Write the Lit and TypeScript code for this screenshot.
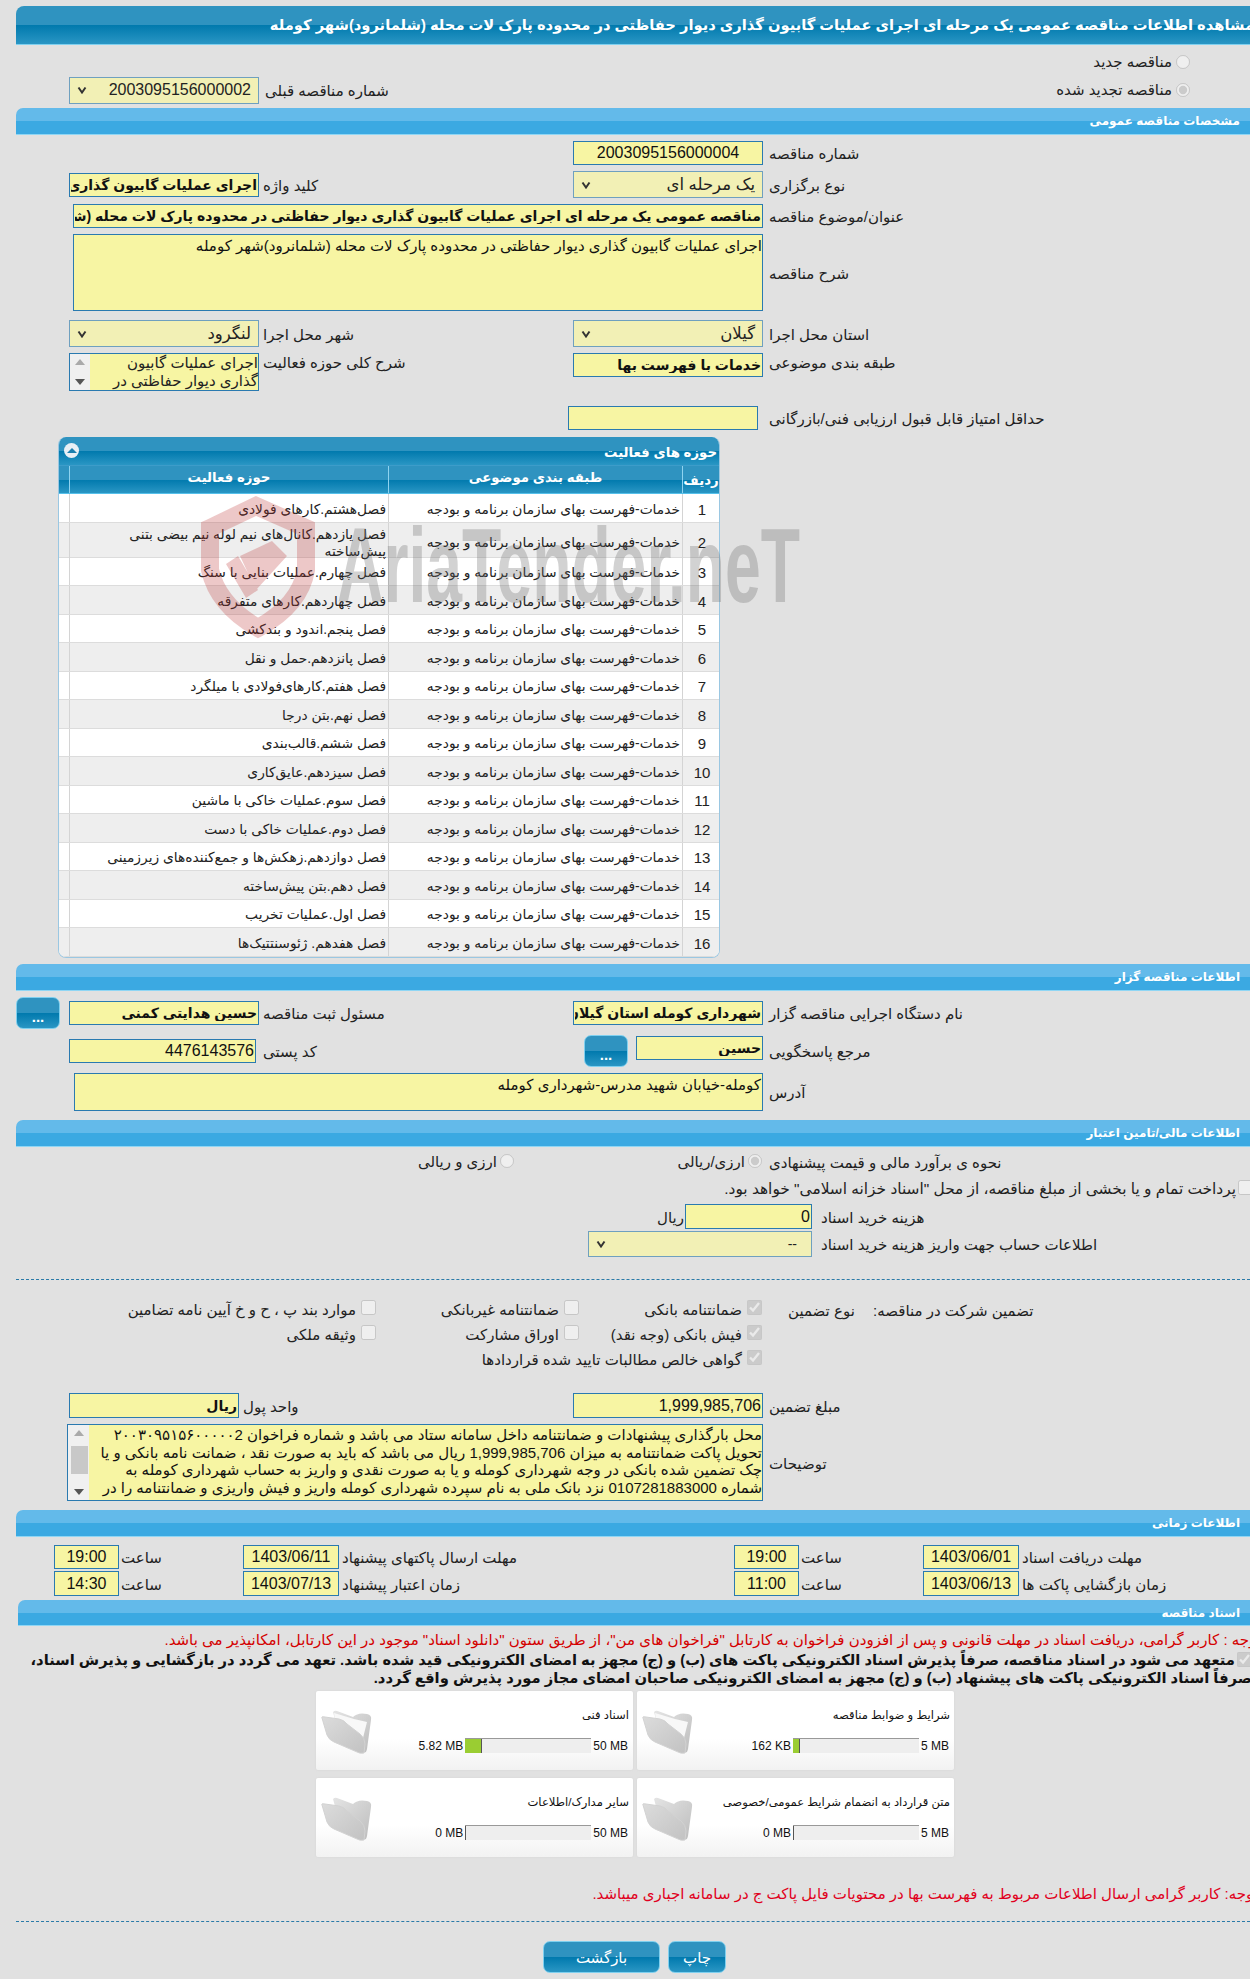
import { LitElement, html, css, svg } from "lit";
import { customElement } from "lit/decorators.js";

const ACTIVITIES = [
  "فصل‌هشتم.کارهای فولادی",
  "فصل یازدهم.کانال‌های نیم لوله نیم بیضی بتنی پیش‌ساخته",
  "فصل چهارم.عملیات بنایی با سنگ",
  "فصل چهاردهم.کارهای متفرقه",
  "فصل پنجم.اندود و بندکشی",
  "فصل پانزدهم.حمل و نقل",
  "فصل هفتم.کارهای‌فولادی با میلگرد",
  "فصل نهم.بتن درجا",
  "فصل ششم.قالب‌بندی",
  "فصل سیزدهم.عایق‌کاری",
  "فصل سوم.عملیات خاکی با ماشین",
  "فصل دوم.عملیات خاکی با دست",
  "فصل دوازدهم.زهکش‌ها و جمع‌کننده‌های زیرزمینی",
  "فصل دهم.بتن پیش‌ساخته",
  "فصل اول.عملیات تخریب",
  "فصل هفدهم. ژئوسنتتیک‌ها",
];

const CARDS = [
  { title: "شرایط و ضوابط مناقصه", max: "5 MB", used: "162 KB", fill: 7, paper: true },
  { title: "اسناد فنی", max: "50 MB", used: "5.82 MB", fill: 17, paper: true },
  { title: "متن قرارداد به انضمام شرایط عمومی/خصوصی", max: "5 MB", used: "0 MB", fill: 0, paper: false },
  { title: "سایر مدارک/اطلاعات", max: "50 MB", used: "0 MB", fill: 0, paper: false },
];

const chevron = html`<svg class="chev" viewBox="0 0 10 8"><path d="M1.5 1.5 5 6.5 8.5 1.5" fill="none" stroke="#333" stroke-width="2"/></svg>`;

const folder = (paper: boolean) => svg`
  <svg class="folder" viewBox="0 0 52 46">
    <defs>
      <linearGradient id="fb" x1="0" y1="0" x2="1" y2="1"><stop offset="0" stop-color="#e4e4e4"/><stop offset="1" stop-color="#bdbdbd"/></linearGradient>
      <linearGradient id="ff" x1="0" y1="0" x2="1" y2="1"><stop offset="0" stop-color="#dcdcdc"/><stop offset="1" stop-color="#c2c2c2"/></linearGradient>
    </defs>
    <path d="M13 4 Q15 2 17 3 L33 9 Q38 4 47 6 Q52 7 51 12 L47 41 Q46 46 43 44 L20 30 Z" fill="url(#fb)"/>
    ${paper ? svg`<path d="M14 5 L34 11 L47 14 L43 30 L16 18 Z" fill="#f8f8f8"/>` : ""}
    <path d="M2 10 Q1 8 5 9 L19 11 Q24 12 27 16 L40 26 Q45 30 45 36 L44 45 Q40 46 37 44 L14 34 Q9 32 7 27 Z" fill="url(#ff)" stroke="#d2d2d2" stroke-width="1"/>
  </svg>`;

@customElement("app-root")
export class AppRoot extends LitElement {
  static styles = css`
    :host {
      display: block;
      position: relative;
      width: 1250px;
      height: 1979px;
      overflow: hidden;
      background: #e1e1e1;
      direction: rtl;
      font-family: "Liberation Sans", "DejaVu Sans", sans-serif;
      font-size: 15px;
      color: #222;
    }
    * { box-sizing: border-box; }
    .page { padding-top: 6px; }

    .head {
      margin-left: 16px;
      height: 39px;
      border-radius: 8px 0 0 0;
      background: linear-gradient(#2f93c0 0 50%, #0079ad 50%, #2a96c4 100%);
      border-bottom: 1px solid #7fd0ef;
      color: #fff;
      font-weight: bold;
      font-size: 14.7px;
      line-height: 38px;
      white-space: nowrap;
    }
    .head span { display: inline-block; margin-right: -4px; }

    .bar {
      margin-left: 16px;
      height: 27px;
      border-radius: 7px 0 0 0;
      background: linear-gradient(#63baea 0 50%, #3ba9e2 50%, #3ba9e2 100%);
      border-bottom: 1px solid #8fd6f4;
      color: #fff;
      font-weight: bold;
      font-size: 12px;
      line-height: 27px;
      padding-right: 10px;
      white-space: nowrap;
    }
    .bar.docs { margin-left: 18px; height: 26px; }

    .grid {
      display: grid;
      grid-template-columns: 481px 196px 310px 194px 69px;
      align-items: center;
    }
    .lab {
      text-align: left;
      white-space: nowrap;
      padding-top: 2px;
    }
    .lab.l { padding-left: 2px; }
    .top { padding: 3px 0 4px; grid-template-rows: 28px 28px; }
    .radio-cell { padding-right: 60px; display: flex; align-items: center; gap: 4px; white-space: nowrap; }
    .radio-cell input { margin-top: -5px; }
    .main { padding-top: 3px; grid-template-rows: 30px 33px 30px 83px 39px 50px 30px; }
    .top-lab { align-self: start; padding-top: 1px; }

    .f {
      display: block;
      font-family: inherit;
      border: 1px solid #2a7ab0;
      background: #f7f5a3;
      color: #111;
      height: 24px;
      width: 190px;
      padding: 0 1px;
      font-size: 16px;
      direction: rtl;
      justify-self: end;
      outline: none;
      border-radius: 0;
      overflow: hidden;
      white-space: nowrap;
      line-height: 22px;
    }
    .center { text-align: center; }
    .bold { font-weight: bold; font-size: 14px; }
    .sel {
      display: flex;
      align-items: center;
      justify-content: space-between;
      justify-self: end;
      width: 190px;
      height: 27px;
      border: 1px solid #6fa0bf;
      background: #f2f0b5;
      padding: 0 7px;
      font-size: 16.5px;
      color: #222;
      white-space: nowrap;
    }
    .sel.num { font-size: 16px; }
    .chev { width: 10px; height: 8px; flex: none; }
    .wide { grid-column: 2 / span 3; justify-self: start; margin-right: 6px; }
    .title-f { width: 690px; }
    .area {
      width: 690px;
      height: 77px;
      white-space: normal;
      font-size: 15px;
      line-height: 20px;
      padding: 1px 0 0 2px;
    }
    .list {
      display: flex;
      justify-self: end;
      width: 190px;
      height: 38px;
      border: 1px solid #2a7ab0;
      background: #f7f5a3;
      overflow: hidden;
      align-self: start;
    }
    .list-text { flex: 1; font-size: 15px; line-height: 18px; overflow: hidden; white-space: nowrap; }
    .scroll {
      width: 20px;
      flex: none;
      background: #f0f0f0;
      position: relative;
      display: flex;
      flex-direction: column;
      align-items: center;
      justify-content: space-between;
      padding: 5px 0;
    }
    .sc-up { width: 0; height: 0; border: 5px solid transparent; border-top: 0; border-bottom: 6px solid #aaa; }
    .sc-dn { width: 0; height: 0; border: 5px solid transparent; border-bottom: 0; border-top: 6px solid #555; }
    .min-f { justify-self: end; margin-left: -5px; margin-right: 11px; }

    .panel {
      margin: 4px 530px 6px 0;
      width: 662px;
      height: 521px;
      background: #fff;
      border: 1px solid #9ac7e2;
      border-top: 0;
      border-radius: 8px;
      overflow: hidden;
    }
    .ptitle {
      height: 29px;
      position: relative;
      background: linear-gradient(#2f93c0 0 50%, #0079ad 50%, #2a96c4 100%);
      color: #fff;
      font-weight: bold;
      font-size: 13.3px;
      line-height: 31px;
      padding-right: 2px;
      border-bottom: 1px solid #3d9cc9;
    }
    .collapse {
      position: absolute;
      left: 5px;
      top: 6px;
      width: 15px;
      height: 15px;
      border-radius: 50%;
      background: #e8eff5;
      display: flex;
      align-items: center;
      justify-content: center;
    }
    .collapse i { width: 0; height: 0; border: 5px solid transparent; border-top: 0; border-bottom: 5px solid #1c7fae; }
    .tr {
      display: grid;
      grid-template-columns: 37px 294px 319px 1fr;
      height: 28.5px;
      border-bottom: 1px solid #dcdcdc;
      font-size: 13.8px;
      color: #222;
    }
    .tr > div { border-left: 1px solid #d4d4d4; display: flex; align-items: center; padding: 3px 2px 0 4px; line-height: 17px; }
    .tr > div:first-child { justify-content: center; font-size: 15px; }
    .tr > div:last-child { border-left: 0; }
    .tr.even { background: #eee; }
    .tr.tall { height: 35px; }
    .tr.h {
      height: 28px;
      background: linear-gradient(#2f93c0 0 50%, #0079ad 50%, #2a96c4 100%);
      color: #fff;
      font-weight: bold;
      border-bottom: 1px solid #55c0ea;
      font-size: 13.3px;
    }
    .tr.h > div { justify-content: center; border-left: 1px solid #8fd3f0; padding: 0 0 5px; }
    .tr.h > div:first-child { font-size: 13.3px; padding: 2px 0 0; }
    .tr.h > div:last-child { border-left: 0; }

    .org { padding: 6px 0 9px; grid-template-rows: 32px 32px 38px; row-gap: 6px; }
    .btn {
      display: flex;
      align-items: center;
      justify-content: center;
      flex: none;
      border-radius: 7px;
      border: 1px solid #7fd0ef;
      background: linear-gradient(#2f93c0 0 50%, #0079ad 50%, #2a96c4 100%);
      color: #fff;
      font-weight: bold;
      width: 44px;
      height: 32px;
      padding-top: 6px;
    }
    .btn-cell { justify-self: end; margin-left: 16px; grid-column: 5; }
    .ref-cell { display: flex; gap: 8px; margin-right: 6px; align-self: start; }
    .ref-f { width: 127px; height: 24px; margin-top: 1px; }
    .post { width: 187px; }
    .addr {
      width: 689px;
      height: 38px;
      white-space: normal;
      font-size: 15px;
      line-height: 20px;
      padding-top: 1px;
    }

    .fin1 { height: 30px; }
    input[type="radio"], input[type="checkbox"] { margin: 0; flex: none; }
    input[type="radio"] { width: 14px; height: 14px; }
    input[type="checkbox"] { width: 15px; height: 15px; }
    .fr { display: flex; align-items: center; gap: 3px; white-space: nowrap; }
    .fr2 { margin-right: 7px; grid-column: 2; }
    .fr3 { margin-right: 59px; grid-column: 3; }
    .fr input { margin-top: -3px; }
    .payment { display: flex; align-items: center; gap: 2px; height: 24px; white-space: nowrap; margin-right: -3px; font-size: 15.4px; }
    .payment input { margin-top: -3px; }
    .fin2 {
      display: grid;
      grid-template-columns: 429px auto 1fr;
      grid-template-rows: 25px 26px;
      row-gap: 2px;
      padding-top: 3px;
      align-items: center;
    }
    .fee { width: 127px; height: 25px; margin-right: 9px; }
    .acc { width: 224px; height: 26px; margin-right: 9px; justify-self: start; padding-right: 14px; font-size: 14px; }
    .span2 { grid-column: 2 / span 2; }
    .rial { display: flex; align-items: center; white-space: nowrap; }
    .rial span { padding: 3px 1px 0 0; }
    .dash { margin: 22px 0 0 16px; border-top: 1px dashed #2a7aa8; height: 1px; }
    .dash.d2 { margin-top: 0; }

    .guar {
      display: grid;
      grid-template-columns: 377px 85px 209px 203px 1fr;
      grid-auto-rows: 25px;
      padding-top: 17px;
      align-items: center;
    }
    .guar .lab { padding-left: 0; }
    .chk { display: flex; align-items: center; gap: 5px; white-space: nowrap; }
    .chk input { margin-top: -4px; }
    .chk.c3 { padding-right: 26px; grid-column: 3; }
    .chk.c4 { grid-column: 4; }
    .chk.c5 { grid-column: 5; }

    .amt { padding-top: 21px; grid-template-rows: 25px 77px; row-gap: 6px; }
    .amt-f { height: 25px; }
    .unit-cell { grid-column: 3 / span 2; display: flex; justify-content: flex-end; gap: 4px; align-items: center; }
    .unit-f { width: 170px; height: 25px; }
    .note-box {
      grid-column: 2 / span 4;
      display: flex;
      justify-self: start;
      margin-right: 6px;
      width: 696px;
      height: 77px;
      border: 1px solid #2a7ab0;
      background: #f7f5a3;
      overflow: hidden;
    }
    .note-text { flex: 1; font-size: 15px; line-height: 17.7px; white-space: nowrap; overflow: hidden; color: #111; padding-top: 1px; }
    .note-scroll { width: 21px; }
    .thumb { position: absolute; top: 21px; left: 3px; width: 17px; height: 28px; background: #c8c8c8; }
    .amt-wrap { padding-bottom: 9px; }

    .dates {
      display: grid;
      grid-template-columns: 228px 99px 122px 67px 392px 99px 122px 67px 54px;
      grid-template-rows: 24px 25px;
      row-gap: 2px;
      padding: 8px 0 4px;
      align-items: center;
    }
    .d { width: 96px; height: 100%; font-size: 16px; text-align: center; padding: 0; }
    .t { width: 65px; height: 100%; font-size: 16px; text-align: center; padding: 0; }

    .red { color: #d40000; white-space: nowrap; line-height: 28px; height: 26px; margin-right: -11px; font-size: 15px; }
    .pledge { font-weight: bold; color: #111; line-height: 17.6px; white-space: nowrap; margin-right: -2px; font-size: 14.75px; height: 39px; }
    .pledge input { vertical-align: -2px; margin: 0 0 0 2px; }

    .cards {
      display: grid;
      grid-template-columns: 317px 317px;
      grid-template-rows: 79px 79px;
      gap: 8px 4px;
      margin-right: 296px;
      width: 638px;
    }
    .card {
      display: flex;
      border-radius: 2px;
      background: linear-gradient(#fff 0 60%, #f2f2f2 100%);
      box-shadow: 0 0 2px #d0d0d0;
    }
    .card-main { flex: 1; padding: 15px 4px 0 0; min-width: 0; }
    .card-title { font-size: 11.6px; line-height: 18px; white-space: nowrap; color: #111; height: 32px; }
    .prog { display: flex; align-items: center; gap: 2px; padding-right: 1px; font-size: 12px; color: #111; white-space: nowrap; }
    .prog span { direction: ltr; unicode-bidi: isolate; }
    .track { width: 126px; height: 15px; background: #eee; border-top: 1px solid #999; direction: ltr; display: flex; }
    .fill { background: #9acd32; border-right: 1px solid #555; height: 100%; min-width: 1px; }
    .folder { width: 52px; height: 46px; flex: none; margin: 17px 0 0 4px; filter: blur(.4px); }

    .red2 { color: #e00020; white-space: nowrap; margin: 27px -8px 0 0; height: 37px; line-height: 20px; font-size: 15px; }
    .btns { display: flex; gap: 8px; margin: 19px 524px 0 0; }
    .btns .btn { font-weight: normal; font-size: 15px; height: 32px; padding-top: 2px; }
    .btns .b1 { width: 58px; }
    .btns .b2 { width: 117px; }

    .wm { position: absolute; left: 195px; top: 495px; width: 620px; height: 150px; pointer-events: none; direction: ltr; }
    .wm-text { font-family: "Liberation Sans", sans-serif; font-weight: bold; font-size: 106px; fill: rgba(105, 105, 105, 0.3); }
  `;

  private row(i: number, txt: string) {
    const n = i + 1;
    return html`<div class="tr ${n % 2 === 0 ? "even" : ""} ${n === 2 ? "tall" : ""}">
      <div>${n}</div>
      <div>خدمات-فهرست بهای سازمان برنامه و بودجه</div>
      <div>${txt}</div>
      <div></div>
    </div>`;
  }

  render() {
    return html`
      <div class="page">
        <div class="head"><span>مشاهده اطلاعات مناقصه عمومی یک مرحله ای اجرای عملیات گابیون گذاری دیوار حفاظتی در محدوده پارک لات محله (شلمانرود)شهر کومله</span></div>

        <div class="grid top">
          <div class="radio-cell"><input type="radio" disabled /><span>مناقصه جدید</span></div>
          <span></span><span></span><span></span><span></span>
          <div class="radio-cell"><input type="radio" disabled checked /><span>مناقصه تجدید شده</span></div>
          <span></span>
          <div class="lab l">شماره مناقصه قبلی</div>
          <div class="sel num"><span>2003095156000002</span>${chevron}</div>
        </div>

        <div class="bar">مشخصات مناقصه عمومی</div>
        <div class="grid main">
          <div class="lab">شماره مناقصه</div>
          <input class="f center" readonly .value=${"2003095156000004"} />
          <span></span><span></span><span></span>

          <div class="lab">نوع برگزاری</div>
          <div class="sel"><span>یک مرحله ای</span>${chevron}</div>
          <div class="lab">کلید واژه</div>
          <input class="f bold" readonly .value=${"اجرای عملیات گابیون گذاری"} />
          <span></span>

          <div class="lab">عنوان/موضوع مناقصه</div>
          <input class="f bold wide title-f" readonly .value=${"مناقصه عمومی یک مرحله ای اجرای عملیات گابیون گذاری دیوار حفاظتی در محدوده پارک لات محله (شلمانرود)شهر کومله"} />
          <span></span>

          <div class="lab">شرح مناقصه</div>
          <div class="f wide area">اجرای عملیات گابیون گذاری دیوار حفاظتی در محدوده پارک لات محله (شلمانرود)شهر کومله</div>
          <span></span>

          <div class="lab">استان محل اجرا</div>
          <div class="sel"><span>گیلان</span>${chevron}</div>
          <div class="lab">شهر محل اجرا</div>
          <div class="sel"><span>لنگرود</span>${chevron}</div>
          <span></span>

          <div class="lab top-lab">طبقه بندی موضوعی</div>
          <input class="f bold top-lab" readonly .value=${"خدمات با فهرست بها"} />
          <div class="lab top-lab">شرح کلی حوزه فعالیت</div>
          <div class="list">
            <div class="list-text">اجرای عملیات گابیون<br />گذاری دیوار حفاظتی در</div>
            <div class="scroll"><i class="sc-up"></i><i class="sc-dn"></i></div>
          </div>
          <span></span>

          <div class="lab">حداقل امتیاز قابل قبول ارزیابی فنی/بازرگانی</div>
          <input class="f min-f" readonly />
          <span></span><span></span><span></span>
        </div>

        <div class="panel">
          <div class="ptitle">حوزه های فعالیت<span class="collapse"><i></i></span></div>
          <div class="tr h"><div>ردیف</div><div>طبقه بندی موضوعی</div><div>حوزه فعالیت</div><div></div></div>
          ${ACTIVITIES.map((a, i) => this.row(i, a))}
        </div>

        <div class="bar">اطلاعات مناقصه گزار</div>
        <div class="grid org">
          <div class="lab">نام دستگاه اجرایی مناقصه گزار</div>
          <input class="f bold" readonly .value=${"شهرداری کومله استان گیلان"} />
          <div class="lab">مسئول ثبت مناقصه</div>
          <input class="f bold" readonly .value=${"حسین هدایتی کمنی"} />
          <div class="btn btn-cell">...</div>

          <div class="lab">مرجع پاسخگویی</div>
          <div class="ref-cell"><input class="f bold ref-f" readonly .value=${"حسین"} /><div class="btn">...</div></div>
          <div class="lab">کد پستی</div>
          <input class="f post" readonly .value=${"4476143576"} />
          <span></span>

          <div class="lab">آدرس</div>
          <div class="f wide addr">کومله-خیابان شهید مدرس-شهرداری کومله</div>
        </div>

        <div class="bar">اطلاعات مالی/تامین اعتبار</div>
        <div class="grid fin1">
          <div class="lab">نحوه ی برآورد مالی و قیمت پیشنهادی</div>
          <div class="fr fr2"><input type="radio" disabled checked /><span>ارزی/ریالی</span></div>
          <div class="fr fr3"><input type="radio" disabled /><span>ارزی و ریالی</span></div>
        </div>
        <div class="payment"><input type="checkbox" disabled /><span>پرداخت تمام و یا بخشی از مبلغ مناقصه، از محل "اسناد خزانه اسلامی" خواهد بود.</span></div>
        <div class="fin2">
          <div class="lab">هزینه خرید اسناد</div>
          <div class="rial span2"><input class="f fee" readonly .value=${"0"} /><span>ریال</span></div>
          <div class="lab">اطلاعات حساب جهت واریز هزینه خرید اسناد</div>
          <div class="sel acc span2"><span>--</span>${chevron}</div>
        </div>
        <div class="dash"></div>

        <div class="guar">
          <div class="lab">تضمین شرکت در مناقصه:</div>
          <div class="lab">نوع تضمین</div>
          <div class="chk c3"><input type="checkbox" disabled checked /><span>ضمانتنامه بانکی</span></div>
          <div class="chk c4"><input type="checkbox" disabled /><span>ضمانتنامه غیربانکی</span></div>
          <div class="chk c5"><input type="checkbox" disabled /><span>موارد بند پ ، ح و خ آیین نامه تضامین</span></div>
          <div class="chk c3"><input type="checkbox" disabled checked /><span>فیش بانکی (وجه نقد)</span></div>
          <div class="chk c4"><input type="checkbox" disabled /><span>اوراق مشارکت</span></div>
          <div class="chk c5"><input type="checkbox" disabled /><span>وثیقه ملکی</span></div>
          <div class="chk c3"><input type="checkbox" disabled checked /><span>گواهی خالص مطالبات تایید شده قراردادها</span></div>
        </div>

        <div class="grid amt amt-wrap">
          <div class="lab">مبلغ تضمین</div>
          <input class="f amt-f" readonly .value=${"1,999,985,706"} />
          <div class="unit-cell"><span class="lab">واحد پول</span><input class="f bold unit-f" readonly .value=${"ریال"} /></div>
          <span></span>
          <div class="lab">توضیحات</div>
          <div class="note-box">
            <div class="note-text">
              محل بارگذاری پیشنهادات و ضمانتنامه داخل سامانه ستاد می باشد و شماره فراخوان ۲۰۰۳۰۹۵۱۵۶۰۰۰۰۰2<br />
              تحویل پاکت ضمانتنامه به میزان 1,999,985,706 ریال می باشد که باید به صورت نقد ، ضمانت نامه بانکی و یا<br />
              چک تضمین شده بانکی در وجه شهرداری کومله و یا به صورت نقدی و واریز به حساب شهرداری کومله به<br />
              شماره 0107281883000 نزد بانک ملی به نام سپرده شهرداری کومله واریز و فیش واریزی و ضمانتنامه را در
            </div>
            <div class="scroll note-scroll"><i class="sc-up"></i><span class="thumb"></span><i class="sc-dn"></i></div>
          </div>
        </div>

        <div class="bar">اطلاعات زمانی</div>
        <div class="dates">
          <div class="lab">مهلت دریافت اسناد</div>
          <input class="f d" readonly .value=${"1403/06/01"} />
          <div class="lab">ساعت</div>
          <input class="f t" readonly .value=${"19:00"} />
          <div class="lab">مهلت ارسال پاکتهای پیشنهاد</div>
          <input class="f d" readonly .value=${"1403/06/11"} />
          <div class="lab">ساعت</div>
          <input class="f t" readonly .value=${"19:00"} />
          <span></span>
          <div class="lab">زمان بازگشایی پاکت ها</div>
          <input class="f d" readonly .value=${"1403/06/13"} />
          <div class="lab">ساعت</div>
          <input class="f t" readonly .value=${"11:00"} />
          <div class="lab">زمان اعتبار پیشنهاد</div>
          <input class="f d" readonly .value=${"1403/07/13"} />
          <div class="lab">ساعت</div>
          <input class="f t" readonly .value=${"14:30"} />
          <span></span>
        </div>

        <div class="bar docs">اسناد مناقصه</div>
        <div class="red">توجه : کاربر گرامی، دریافت اسناد در مهلت قانونی و پس از افزودن فراخوان به کارتابل "فراخوان های من"، از طریق ستون "دانلود اسناد" موجود در این کارتابل، امکانپذیر می باشد.</div>
        <div class="pledge">
          <input type="checkbox" disabled checked />متعهد می شود در اسناد مناقصه، صرفاً پذیرش اسناد الکترونیکی پاکت های (ب) و (ج) مجهز به امضای الکترونیکی قید شده باشد. تعهد می گردد در بازگشایی و پذیرش اسناد،<br />
          صرفاً اسناد الکترونیکی پاکت های پیشنهاد (ب) و (ج) مجهز به امضای الکترونیکی صاحبان امضای مجاز مورد پذیرش واقع گردد.
        </div>

        <div class="cards">
          ${CARDS.map(
            (c) => html`<div class="card">
              <div class="card-main">
                <div class="card-title">${c.title}</div>
                <div class="prog">
                  <span>${c.max}</span>
                  <div class="track"><div class="fill" style="width:${c.fill}px"></div></div>
                  <span>${c.used}</span>
                </div>
              </div>
              ${folder(c.paper)}
            </div>`
          )}
        </div>

        <div class="red2">توجه: کاربر گرامی ارسال اطلاعات مربوط به فهرست بها در محتویات فایل پاکت ج در سامانه اجباری میباشد.</div>
        <div class="dash d2"></div>
        <div class="btns">
          <div class="btn b1">چاپ</div>
          <div class="btn b2">بازگشت</div>
        </div>
      </div>

      <svg class="wm" viewBox="195 495 620 150">
        <path d="M210 528 L256 506 L306 528 L306 570 Q300 605 258 628 Q218 605 210 570 Z" fill="none" stroke="rgba(190,50,50,.27)" stroke-width="18"/>
        <path d="M226 564 L238 556 L258 590 L246 598 Z M240 556 L272 541 L287 556 L256 590 Z" fill="rgba(190,50,50,.27)"/>
        <text class="wm-text" x="337" y="602" textLength="463" lengthAdjust="spacingAndGlyphs">AriaTender.neT</text>
      </svg>
    `;
  }
}
